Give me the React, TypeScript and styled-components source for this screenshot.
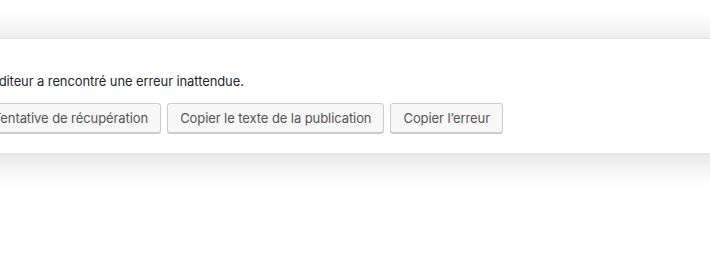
import React from "react";
import styled, { createGlobalStyle } from "styled-components";

const Global = createGlobalStyle`
  html, body { margin: 0; padding: 0; background: #fff; overflow: hidden; }
  body { width: 710px; height: 259px; }
`;

const Stage = styled.div`
  padding-top: 38px;
  width: 710px;
  height: 259px;
  box-sizing: border-box;
  overflow: hidden;
`;

const Warning = styled.div`
  margin-left: -33px;
  width: 800px;
  box-sizing: border-box;
  background: #fff;
  border-top: 1px solid #e2e4e7;
  border-bottom: 1px solid #e2e4e7;
  box-shadow: 0 3px 32px rgba(25, 30, 35, 0.18);
  padding: 33px 14px 20px 15px;
  font-family: Inter, "Liberation Sans", sans-serif;
`;

const Message = styled.p`
  margin: 0 0 13px;
  font-size: 13px;
  line-height: 18px;
  letter-spacing: -0.1px;
  color: #23282d;
`;

const Actions = styled.div`
  display: flex;
  gap: 6px;
  margin-left: -2px;
`;

const Button = styled.button`
  height: 30px;
  box-sizing: border-box;
  padding: 0 12px 1px;
  margin: 0;
  border: 1px solid #ccc;
  border-radius: 3px;
  background: #f7f7f7;
  box-shadow: 0 1px 0 #ccc;
  color: #555;
  font-family: Inter, "Liberation Sans", sans-serif;
  font-size: 13px;
  line-height: 26px;
  letter-spacing: -0.08px;
  white-space: nowrap;
`;

export default function App() {
  return (
    <>
      <Global />
      <Stage>
        <Warning>
          <Message>L’éditeur a rencontré une erreur inattendue.</Message>
          <Actions>
            <Button>Tentative de récupération</Button>
            <Button>Copier le texte de la publication</Button>
            <Button>Copier l’erreur</Button>
          </Actions>
        </Warning>
      </Stage>
    </>
  );
}
